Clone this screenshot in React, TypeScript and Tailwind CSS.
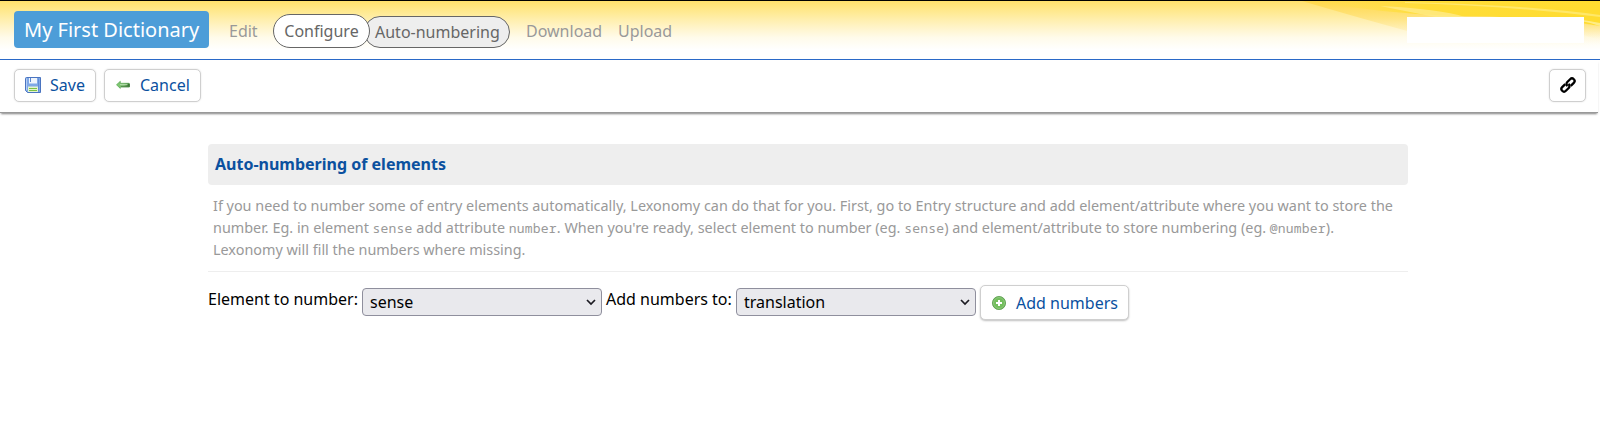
import React from "react";

function SaveIcon() {
  return (
    <svg width="16" height="16" viewBox="0 0 16 16" className="shrink-0">
      <path d="M.5 1.5a1 1 0 0 1 1-1h14v15h-13l-2-2z" fill="#7fa8e6" stroke="#4a74c0" />
      <path d="M4 1h8v5.5H4z" fill="#eef4fc" />
      <path d="M5 1h1v4H5z" fill="#5b86cf" />
      <path d="M1.5 1.5v11.5" stroke="#b5cdf4" />
      <path d="M13.5 1.5v13" stroke="#5f8bd6" />
      <path d="M3 9.5h10V15H3z" fill="#e4f3d2" />
      <path d="M4 11h8v1H4zM4 13h8v1H4z" fill="#7cc244" />
    </svg>
  );
}

function BackIcon() {
  return (
    <svg width="16" height="16" viewBox="0 0 16 16" className="shrink-0">
      <defs>
        <linearGradient id="arrow" x1="0" x2="1">
          <stop offset="0" stopColor="#7fce72" />
          <stop offset="0.6" stopColor="#7cb672" />
          <stop offset="1" stopColor="#2b6327" />
        </linearGradient>
      </defs>
      <path d="M1.5 7.8 5.3 4.3v2h8.9v3.5H5.3v1.6z" fill="url(#arrow)" stroke="#55a34d" strokeWidth=".7" />
      <path d="M6 9.8h8.5v-3" fill="none" stroke="#2f6b2a" strokeWidth=".7" />
      <path d="M5 7.6h7.5" stroke="#b9e3b0" strokeWidth=".9" />
    </svg>
  );
}

function AddIcon() {
  return (
    <svg width="16" height="16" viewBox="0 0 16 16" className="shrink-0">
      <circle cx="8" cy="8" r="6.6" fill="#5fae4e" stroke="#5a9d4d" strokeWidth=".8" />
      <circle cx="8" cy="8" r="5.5" fill="#72be5c" stroke="#9dd08e" strokeWidth=".7" />
      <path d="M8 5v6M5 8h6" stroke="#fff" strokeWidth="2" />
    </svg>
  );
}

function LinkIcon() {
  return (
    <svg width="16" height="16" viewBox="0 0 16 16" className="shrink-0">
      <g transform="translate(8 8) rotate(-45)" fill="none" stroke="#000" strokeWidth="2.3">
        <path d="M-1.3-2.6H-5.6a2.6 2.6 0 0 0 0 5.2H-1.6A2.6 2.6 0 0 0 1-.4" />
        <path d="M1.3 2.6H5.6a2.6 2.6 0 0 0 0-5.2H1.6A2.6 2.6 0 0 0-1 .4" />
      </g>
    </svg>
  );
}

function HeaderArt() {
  return (
    <svg className="absolute right-0 top-0" width="420" height="58" viewBox="0 0 420 58">
      <defs>
        <linearGradient id="fade" gradientUnits="userSpaceOnUse" x1="0" x2="0" y1="0" y2="44">
          <stop offset="0" stopColor="#ffd84a" />
          <stop offset=".4" stopColor="#ffe27a" stopOpacity=".8" />
          <stop offset="1" stopColor="#fff6d8" stopOpacity="0" />
        </linearGradient>
        <linearGradient id="edge" x1="0" x2="1">
          <stop offset="0" stopColor="#ffe04a" stopOpacity="0" />
          <stop offset=".4" stopColor="#ffdd38" />
          <stop offset="1" stopColor="#ffdc30" />
        </linearGradient>
        <linearGradient id="corner" x1="0" x2="0" y1="0" y2="1">
          <stop offset="0" stopColor="#ffd84c" stopOpacity=".9" />
          <stop offset="1" stopColor="#fff0bc" stopOpacity="0" />
        </linearGradient>
      </defs>
      <path d="M122 0h298v44H280Q210 26 122 0z" fill="url(#fade)" />
      <path d="M130 0h290v25Q350 15 272 15Q200 12 130 0z" fill="url(#edge)" />
      <path d="M340 16Q385 18 420 25v14Q385 28 340 24z" fill="url(#corner)" />
      <path d="M225 2Q330 5 420 16v-2Q350 4 225 1z" fill="#ffec80" opacity=".7" />
      <path d="M200 5Q260 8 285 16h-30Q230 11 200 5z" fill="#ffeb88" opacity=".8" />
      <path d="M370 16Q400 18 420 25v-3Q395 17 370 16z" fill="#fff09c" opacity=".8" />
    </svg>
  );
}

const buttonClass =
  "flex items-center rounded-[5px] border border-[#cfcfcf] bg-white text-[#0b519f]";

function Select({ value }: { value: string }) {
  return (
    <button className="flex h-7 w-60 items-center justify-between rounded-[4px] border border-[#8f8f9d] bg-[#e9e9ed] pl-[7px] pr-[5px] text-black">
      <span>{value}</span>
      <svg width="10" height="8" viewBox="0 0 10 8" fill="none" stroke="#1c1b22" strokeWidth="1.7">
        <path d="m1 2 4 4 4-4" />
      </svg>
    </button>
  );
}

function Code({ children }: { children: React.ReactNode }) {
  return (
    <code className="font-['Noto_Sans_Mono','DejaVu_Sans_Mono',monospace] text-[13px] leading-none tracking-[0.2px]">
      {children}
    </code>
  );
}

export default function App() {
  return (
    <div className="h-[438px] overflow-hidden bg-white font-['Noto_Sans',sans-serif] text-base leading-6 text-black">
      <header className="relative h-[60px] border-b border-t border-b-[#2a69c8] border-t-black bg-[linear-gradient(to_bottom,#ffe06c_0%,#ffea94_20%,#fff3c4_43%,#fffbea_63%,#ffffff_84%)]">
        <HeaderArt />
        <div className="relative flex h-full items-start pl-[14px] pr-4">
          <h1 className="mt-[10px] flex h-[37px] w-[195px] items-center rounded-[4px] bg-[#4d9dd8] pl-[10px] text-[20px] text-white">
            My First Dictionary
          </h1>
          <nav className="flex items-start whitespace-nowrap text-[#999]">
            <a className="ml-5 mt-[18px] w-11">Edit</a>
            <a className="z-10 mt-[13px] flex h-[34px] w-[97px] items-center justify-center rounded-full border border-[#666] bg-white text-[#666]">
              Configure
            </a>
            <a className="-ml-[6px] mt-[15px] flex h-8 w-[146px] items-center rounded-full border border-[#666] bg-[#eee] pl-[10px] text-[#666]">
              Auto-numbering
            </a>
            <a className="ml-4 mt-[18px] w-[92px]">Download</a>
            <a className="mt-[18px]">Upload</a>
          </nav>
          <div className="ml-auto mt-4 h-[26px] w-[177px] bg-white" />
        </div>
      </header>

      <div className="mr-[2px] flex h-[53px] items-start border-b border-[#999] pl-[14px] pr-3 pt-[9px] shadow-[0_2px_2px_-1px_rgba(0,0,0,0.5)]">
        <button className={`${buttonClass} h-[33px] w-[82px] pb-px pl-[10px] shadow-[0_0_2px_rgba(0,0,0,0.12)]`}>
          <SaveIcon />
          <span className="ml-[9px]">Save</span>
        </button>
        <button className={`${buttonClass} ml-2 h-[33px] w-[97px] pb-px pl-[10px] shadow-[0_0_2px_rgba(0,0,0,0.12)]`}>
          <BackIcon />
          <span className="ml-[9px]">Cancel</span>
        </button>
        <button
          className={`${buttonClass} ml-auto h-[33px] w-[37px] justify-center pb-px shadow-[0_0_2px_rgba(0,0,0,0.12)]`}
        >
          <LinkIcon />
        </button>
      </div>

      <main className="ml-[208px] mt-[31px] w-[1200px]">
        <h2 className="flex h-[41px] items-center rounded-[4px] bg-[#eee] pb-[2px] pl-[7px] font-bold text-[#0b519f]">
          Auto-numbering of elements
        </h2>
        <p className="h-[87px] whitespace-nowrap border-b border-[#eee] pl-[5px] pt-[10px] text-[14.4px] leading-[22px] text-[#999]">
          If you need to number some of entry elements automatically, Lexonomy can do that for you. First, go to Entry
          structure and add element/attribute where you want to store the
          <br />
          number. Eg. in element <Code>sense</Code> add attribute <Code>number</Code>. When you're ready, select element
          to number (eg. <Code>sense</Code>) and element/attribute to store numbering (eg. <Code>@number</Code>).
          <br />
          Lexonomy will fill the numbers where missing.
        </p>
        <div className="mt-[13px] flex items-start whitespace-nowrap">
          <label className="mt-[2px] w-[154px]">Element to number:</label>
          <div className="mt-[3px]">
            <Select value="sense" />
          </div>
          <label className="ml-1 mt-[2px] w-[130px]">Add numbers to:</label>
          <div className="mt-[3px]">
            <Select value="translation" />
          </div>
          <button className={`${buttonClass} ml-1 h-[35px] w-[149px] pl-[10px] shadow-[0_1px_2px_rgba(0,0,0,0.25)]`}>
            <AddIcon />
            <span className="ml-[9px]">Add numbers</span>
          </button>
        </div>
      </main>
    </div>
  );
}
